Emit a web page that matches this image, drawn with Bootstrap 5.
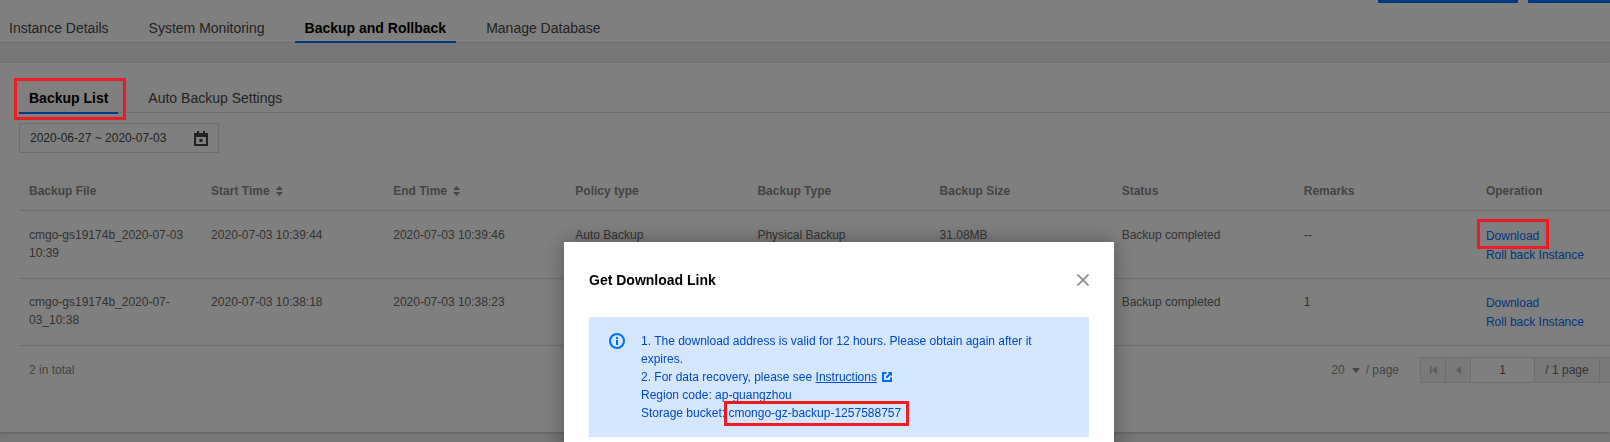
<!doctype html>
<html lang="en">
<head>
<meta charset="utf-8">
<title>Get Download Link</title>
<link href="https://cdn.jsdelivr.net/npm/bootstrap@5.3.0/dist/css/bootstrap.min.css" rel="stylesheet">
<style>
html,body{height:442px;overflow:hidden}
body{background:#eee;font-family:"Liberation Sans",Arial,sans-serif;font-size:12px;line-height:18px;color:#666}
.top-strip{background:#fff;height:3px;gap:10px;overflow:hidden}
.top-btn{background:#0076ff;height:3px}
.top-btn-a{width:140px}
.top-btn-b{width:82px}
.head-area{background:#fff;height:40px;border-bottom:1px solid #ddd}
.tab-item{display:block;font-size:14px;line-height:18px;color:#444;text-decoration:none;padding:16px 10px 4px;margin-right:20px;height:40px;border-bottom:2px solid transparent}
.head-area .tab-item:first-child{padding-left:9px}
.tab-on{color:#000;font-weight:700;border-bottom-color:#0076ff}
.main-panel{background:#fff;height:369px;margin-top:20px;padding:26px 0 0 19px;overflow:hidden;box-shadow:0 1px 3px rgba(0,0,0,.2)}
.sub-tabs{border-bottom:1px solid #ddd;height:24px}
.sub-tabs .tab-item{padding:0 10px 5px;height:25px}
.date-box{width:200px;height:30px;margin-top:10px;border:1px solid #ddd;padding:0 10px;color:#444}
.list-table{width:1639px;max-width:none;table-layout:fixed;margin:18px 0 0;--bs-table-color:#666;--bs-table-border-color:#ddd;--bs-table-bg:transparent}
.list-table th{padding:11px 10px 10px;font-weight:700;color:#888;line-height:18px;border-bottom:1px solid #ddd}
.list-table td{padding:14px 10px 13px;line-height:18px;border-bottom:1px solid #ddd}
.list-table tbody tr:first-child td{padding-top:15px}
.op-link{display:block;color:#006eff;text-decoration:none;line-height:19px}
.op-link:first-child{padding-top:1px}
.sort-ico{margin-left:6px;vertical-align:-1px}
.foot-row{width:1639px;padding:11px 7px 0 10px;color:#888}
.size-pick{margin-right:21px}
.caret-ico{margin:0 6px 0 7px}
.page-box{height:26px;border:1px solid #ddd;color:#666}
.page-cell{height:24px;background:#f2f2f2;border-right:1px solid #ddd;width:25px}
.page-cell:last-child{border-right:0}
.page-input{width:64px;background:#fff}
.page-text{width:65px}
.shot-modal{pointer-events:none}
.shot-dialog{margin:242px 0 0 564px;max-width:none;width:550px}
.shot-content{border:0;border-radius:0;box-shadow:0 0 20px rgba(0,0,0,.35);height:300px;padding:29px 25px 0}
.shot-title{font-size:14px;font-weight:700;color:#000;line-height:18px}
.close-ico{display:block}
.info-box{margin-top:28px;height:120px;background:#d5e7ff;padding:15px 20px;gap:16px;color:#0049c4}
.info-ico{flex:none;margin-top:1px}
.info-box a{color:#0049c4}
.ext-ico{margin-left:5px;vertical-align:-1px}
.red-mark{position:fixed;z-index:1060;border:3px solid #ed1c24}
.mark-a{left:14px;top:78px;width:112px;height:42px}
.mark-b{left:1477px;top:219px;width:72px;height:30px}
.mark-c{left:724px;top:401px;width:185px;height:25px}
</style>
</head>
<body>
<div class="top-strip d-flex justify-content-end">
  <div class="top-btn top-btn-a"></div>
  <div class="top-btn top-btn-b"></div>
</div>
<div class="head-area d-flex">
  <a class="tab-item" href="#">Instance Details</a>
  <a class="tab-item" href="#">System Monitoring</a>
  <a class="tab-item tab-on" href="#">Backup and Rollback</a>
  <a class="tab-item" href="#">Manage Database</a>
</div>
<div class="main-panel">
  <div class="sub-tabs d-flex">
    <a class="tab-item tab-on" href="#">Backup List</a>
    <a class="tab-item" href="#">Auto Backup Settings</a>
  </div>
  <div class="date-box d-flex align-items-center justify-content-between">
    <span>2020-06-27 ~ 2020-07-03</span>
    <svg width="14" height="15" viewBox="0 0 14 15" fill="#444"><path fill-rule="evenodd" d="M0 2h3V0h2v2h4V0h2v2h3v13H0zM2 6v7h10V6z"/><rect x="5.5" y="8" width="3" height="3"/></svg>
  </div>
  <table class="table list-table">
    <thead>
      <tr>
        <th>Backup File</th>
        <th>Start Time<svg class="sort-ico" width="7" height="10" viewBox="0 0 7 10" fill="#888"><path d="M3.5 0 7 4H0zM3.500 10 0 6h7z"/></svg></th>
        <th>End Time<svg class="sort-ico" width="7" height="10" viewBox="0 0 7 10" fill="#888"><path d="M3.5 0 7 4H0zM3.500 10 0 6h7z"/></svg></th>
        <th>Policy type</th>
        <th>Backup Type</th>
        <th>Backup Size</th>
        <th>Status</th>
        <th>Remarks</th>
        <th>Operation</th>
      </tr>
    </thead>
    <tbody>
      <tr>
        <td>cmgo-gs19174b_2020-07-03 10:39</td>
        <td>2020-07-03 10:39:44</td>
        <td>2020-07-03 10:39:46</td>
        <td>Auto Backup</td>
        <td>Physical Backup</td>
        <td>31.08MB</td>
        <td>Backup completed</td>
        <td>--</td>
        <td><a class="op-link" href="#">Download</a><a class="op-link" href="#">Roll back Instance</a></td>
      </tr>
      <tr>
        <td>cmgo-gs19174b_2020-07-<br>03_10:38</td>
        <td>2020-07-03 10:38:18</td>
        <td>2020-07-03 10:38:23</td>
        <td>Auto Backup</td>
        <td>Physical Backup</td>
        <td>31.08MB</td>
        <td>Backup completed</td>
        <td>1</td>
        <td><a class="op-link" href="#">Download</a><a class="op-link" href="#">Roll back Instance</a></td>
      </tr>
    </tbody>
  </table>
  <div class="foot-row d-flex align-items-center justify-content-between">
    <span>2 in total</span>
    <div class="d-flex align-items-center">
      <div class="size-pick d-flex align-items-center">
        <span>20</span>
        <svg class="caret-ico" width="8" height="5" viewBox="0 0 8 5" fill="#888"><path d="M0 0h8L4 5z"/></svg>
        <span>/ page</span>
      </div>
      <div class="page-box d-flex">
        <div class="page-cell d-flex align-items-center justify-content-center"><svg width="7" height="8" viewBox="0 0 7 8" fill="#bbb"><path d="M0 0h1.500v8H0zM7 0v8L2 4z"/></svg></div>
        <div class="page-cell d-flex align-items-center justify-content-center"><svg width="5" height="8" viewBox="0 0 5 8" fill="#bbb"><path d="M5 0v8L0 4z"/></svg></div>
        <div class="page-cell page-input d-flex align-items-center justify-content-center">1</div>
        <div class="page-cell page-text d-flex align-items-center justify-content-center">/ 1 page</div>
        <div class="page-cell d-flex align-items-center justify-content-center"><svg width="5" height="8" viewBox="0 0 5 8" fill="#bbb"><path d="M0 0v8l5-4z"/></svg></div>
        <div class="page-cell d-flex align-items-center justify-content-center"><svg width="7" height="8" viewBox="0 0 7 8" fill="#bbb"><path d="M7 0H5.500v8H7zM0 0v8l5-4z"/></svg></div>
      </div>
    </div>
  </div>
</div>

<div class="modal-backdrop show"></div>
<div class="modal d-block shot-modal">
  <div class="modal-dialog shot-dialog">
    <div class="modal-content shot-content">
      <div class="d-flex align-items-center justify-content-between">
        <div class="shot-title">Get Download Link</div>
        <svg class="close-ico" width="12" height="12" viewBox="0 0 12 12" stroke="#888" stroke-width="1.600" fill="none"><path d="M.5.5l11 11M11.500.5l-11 11"/></svg>
      </div>
      <div class="info-box d-flex">
        <svg class="info-ico" width="16" height="16" viewBox="0 0 16 16"><circle cx="8" cy="8" r="7" fill="none" stroke="#006eff" stroke-width="2"/><rect x="7" y="7" width="2" height="5" fill="#006eff"/><rect x="7" y="4" width="2" height="2" fill="#006eff"/></svg>
        <div>
          1. The download address is valid for 12 hours. Please obtain again after it expires.<br>
          2. For data recovery, please see <a href="#">Instructions</a><svg class="ext-ico" width="10" height="10" viewBox="0 0 10 10"><path fill="#006eff" d="M0 0h4.500v2H2v6h6V5.500h2V10H0z"/><path fill="#006eff" d="M5.500 0H10v4.500L8.500 3 5 6.500 3.500 5 7 1.500z"/></svg><br>
          Region code: ap-guangzhou<br>
          Storage bucket: cmongo-gz-backup-1257588757
        </div>
      </div>
    </div>
  </div>
</div>
<div class="red-mark mark-a"></div>
<div class="red-mark mark-b"></div>
<div class="red-mark mark-c"></div>
<script src="https://cdn.jsdelivr.net/npm/bootstrap@5.3.0/dist/js/bootstrap.bundle.min.js"></script>
</body>
</html>
